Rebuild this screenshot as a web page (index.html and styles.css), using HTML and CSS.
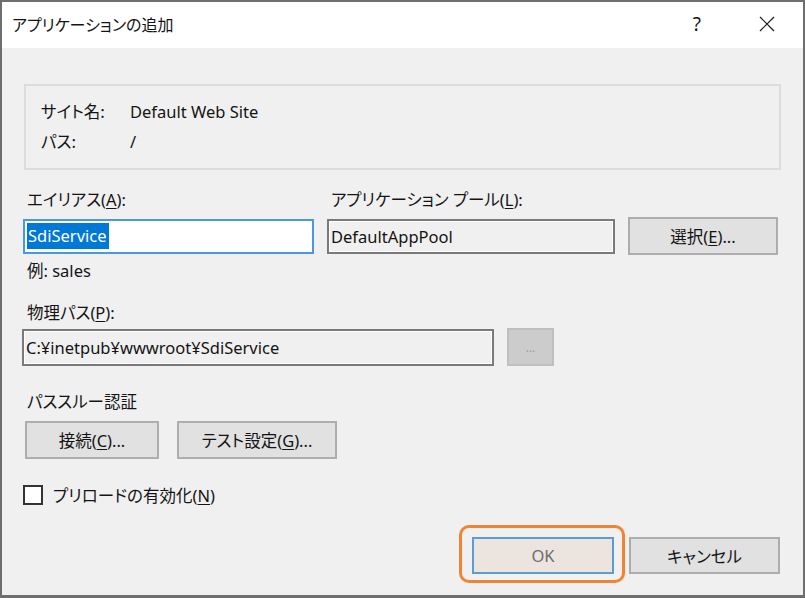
FILE: index.html
```html
<!DOCTYPE html>
<html lang="ja">
<head>
<meta charset="utf-8">
<title>アプリケーションの追加</title>
<link rel="stylesheet" href="styles.css">
</head>
<body>
<div class="dialog">
  <div class="titlebar">
    <span class="title">アプリケーションの追加</span>
    <span class="help">?</span>
    <svg class="close" width="16" height="16" viewBox="0 0 16 16"><path d="M1 1 L15 15 M15 1 L1 15" stroke="#1a1a1a" stroke-width="1.2" fill="none"/></svg>
  </div>
  <div class="content">
    <div class="info">
      <div class="info-row"><span class="k">サイト名:</span><span class="v">Default Web Site</span></div>
      <div class="info-row"><span class="k">パス:</span><span class="v">/</span></div>
    </div>

    <div class="row labels">
      <span class="lbl c1">エイリアス(<u>A</u>):</span>
      <span class="lbl c2">アプリケーション プール(<u>L</u>):</span>
    </div>
    <div class="row inputs">
      <div class="field focus c1"><span class="sel">SdiService</span></div>
      <div class="field ro c2">DefaultAppPool</div>
      <button class="btn c3">選択(<u>E</u>)...</button>
    </div>
    <div class="hint">例: sales</div>

    <div class="lbl phys">物理パス(<u>P</u>):</div>
    <div class="row path">
      <div class="field ro pathfield">C:¥inetpub¥wwwroot¥SdiService</div>
      <button class="btn dis browse">...</button>
    </div>

    <div class="lbl pass">パススルー認証</div>
    <div class="row btnrow">
      <button class="btn connect">接続(<u>C</u>)...</button>
      <button class="btn test">テスト設定(<u>G</u>)...</button>
    </div>

    <label class="check"><span class="box"></span><span>プリロードの有効化(<u>N</u>)</span></label>

    <div class="footer">
      <button class="btn ok">OK</button>
      <button class="btn cancel">キャンセル</button>
    </div>
  </div>
</div>
</body>
</html>
```
FILE: styles.css
```css
* { box-sizing: border-box; }
html, body { margin: 0; padding: 0; }
body {
  width: 805px;
  height: 598px;
  overflow: hidden;
  background: #ffffff;
  font-family: "Noto Sans", "Noto Sans CJK JP", sans-serif;
  font-size: 16.5px;
  color: #141414;
}
u { text-decoration-thickness: 1px; text-underline-offset: 2px; }

.dialog {
  width: 805px;
  height: 598px;
  border: 2px solid #6e6e6e;
  border-bottom-width: 3px;
  background: #f0f0f0;
  display: flex;
  flex-direction: column;
}

.titlebar {
  height: 46px;
  background: #ffffff;
  display: flex;
  align-items: center;
  padding-left: 10px;
  flex: none;
}
.title {
  font-family: "Noto Sans CJK JP", sans-serif;
  font-feature-settings: "palt";
  font-size: 16px;
  flex: 1;
  padding-bottom: 2px;
}
.help {
  font-size: 19px;
  margin-right: 58px;
  padding-bottom: 3px;
}
.close { margin-right: 28px; margin-bottom: 2px; }

.content {
  flex: 1;
  padding-left: 21px;
  padding-right: 23px;
  display: flex;
  flex-direction: column;
}

.info {
  margin-top: 36px;
  margin-left: 1px;
  width: 757px;
  height: 86px;
  border: 2px solid #dcdcdc;
  padding: 10px 0 0 15px;
}
.info-row { display: flex; height: 30px; align-items: center; }
.k {
  width: 89px;
  font-family: "Noto Sans CJK JP", sans-serif;
  font-feature-settings: "palt";
}

.row { display: flex; align-items: center; }
.lbl {
  font-feature-settings: "palt";
  line-height: 20px;
  padding-left: 4px;
}
.labels { margin-top: 20px; height: 20px; }
.labels .c1 { width: 304px; }

.inputs { margin-top: 7px; height: 38px; }
.field {
  height: 35px;
  border: 2px solid #7a7a7a;
  display: flex;
  align-items: center;
  padding-left: 2px;
  white-space: nowrap;
}
.field.focus {
  border-color: #4a98e0;
  background: #ffffff;
  width: 291px;
}
.field.ro {
  background: #f0f0f0;
  box-shadow: inset 0 0 0 1px #ffffff;
}
.inputs .c2 { width: 288px; margin-left: 13px; }
.sel {
  background: #0078d7;
  color: #ffffff;
  padding: 1px 2px 1px 1px;
  line-height: 24px;
}

.btn {
  font-family: "Noto Sans", "Noto Sans CJK JP", sans-serif;
  font-feature-settings: "palt";
  font-size: 16.5px;
  color: #141414;
  background: #e1e1e1;
  border: 2px solid #adadad;
  padding: 0;
  height: 38px;
}
.inputs .c3 { width: 150px; margin-left: 13px; }

.hint { margin-top: 6px; line-height: 20px; padding-left: 4px; }

.phys { margin-top: 22px; }
.path { margin-top: 5px; height: 38px; }
.pathfield { width: 472px; height: 37px; margin-left: -1px; }
.browse {
  width: 47px;
  margin-left: 13px;
  background: #cccccc;
  border-color: #bfbfbf;
  color: #a0a0a0;
  font-size: 12px;
}

.pass { margin-top: 26px; }
.btnrow { margin-top: 9px; }
.connect { width: 134px; margin-left: 2px; }
.test { width: 160px; margin-left: 18px; }

.check {
  margin-top: 26px;
  height: 20px;
  display: flex;
  align-items: center;
  font-feature-settings: "palt";
}
.box {
  width: 20px;
  height: 20px;
  border: 2px solid #333333;
  background: #ffffff;
  margin-right: 10px;
}

.footer {
  margin-top: 32px;
  display: flex;
  justify-content: flex-end;
}
.ok {
  position: relative;
  width: 142px;
  height: 37px;
  background: #ebe4df;
  border-color: #5b9bd8;
  color: #6d6d6d;
}
.ok::after {
  content: "";
  position: absolute;
  top: -14px;
  left: -15px;
  right: -13px;
  bottom: -11px;
  border: 3px solid #f08434;
  border-radius: 10px;
  pointer-events: none;
}
.cancel { width: 151px; height: 37px; margin-left: 15px; }
```
